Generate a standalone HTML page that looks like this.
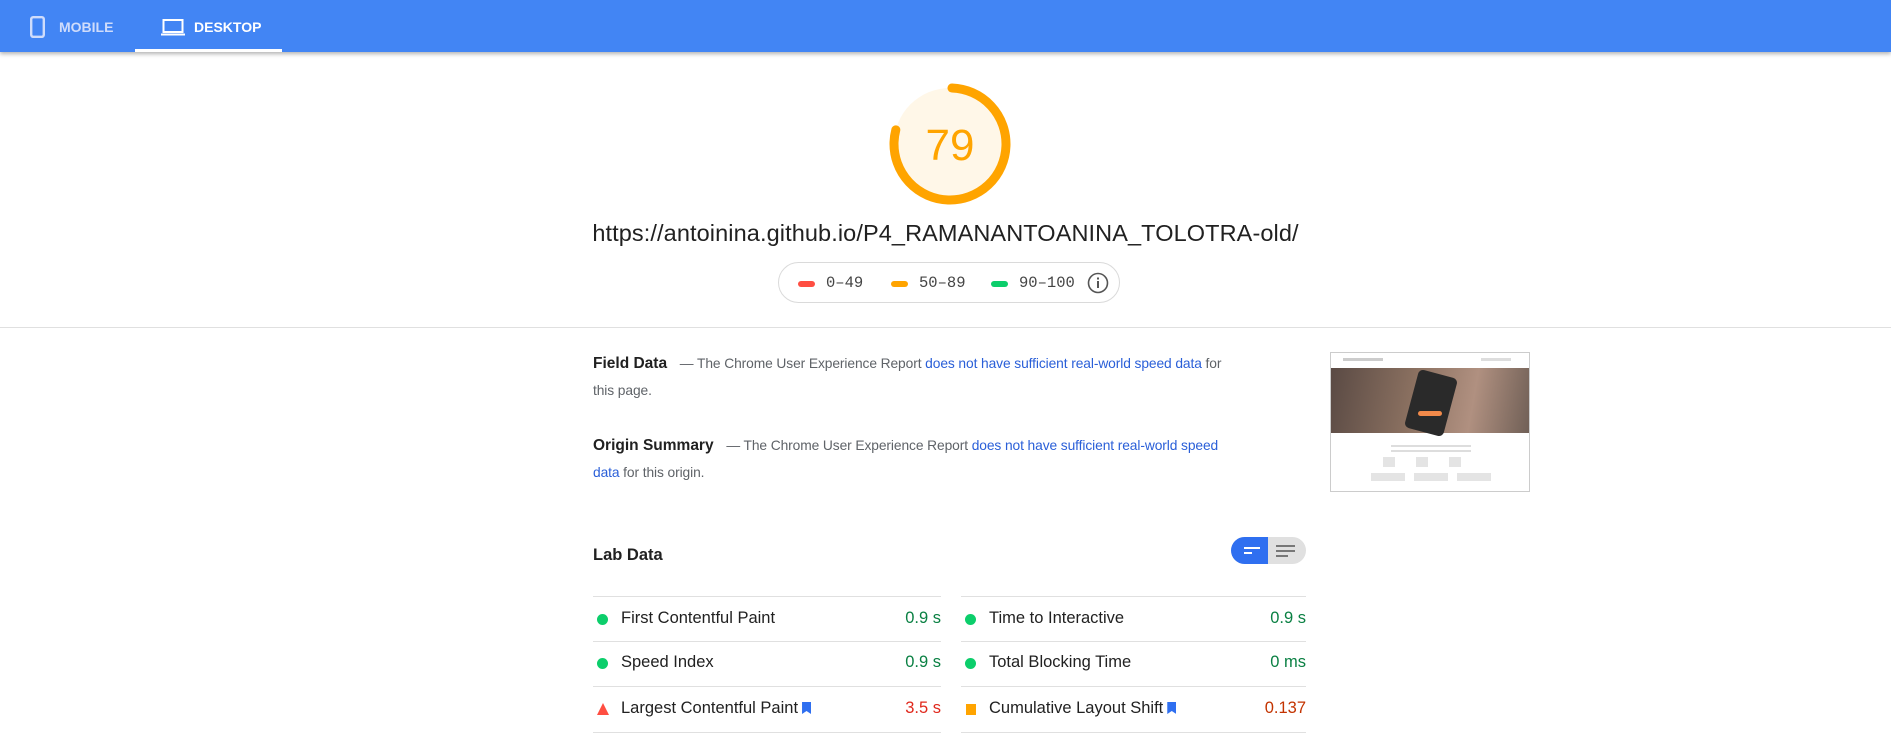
<!DOCTYPE html>
<html><head><meta charset="utf-8"><style>
*{margin:0;padding:0;box-sizing:border-box}
body{width:1891px;height:740px;overflow:hidden;background:#fff;font-family:"Liberation Sans",Arial,sans-serif;color:#212121;position:relative}
.hdr{position:absolute;left:0;top:0;width:1891px;height:52px;background:#4285f4;box-shadow:0 2px 4px rgba(0,0,0,.3)}
.tab{position:absolute;top:0;height:52px;color:#fff;font-weight:bold;font-size:14px;line-height:54px}
.ul{position:absolute;left:135px;top:49px;width:147px;height:3px;background:#fff}
.abs{position:absolute}
.url{position:absolute;left:0;width:1891px;top:220px;text-align:center;font-size:23.5px;color:#212121;letter-spacing:.1px}
.legend{position:absolute;left:778px;top:262px;width:342px;height:41px;border:1px solid #dadada;border-radius:21px;font-family:"Liberation Mono",monospace;font-size:15.5px;color:#444}
.legend span{position:absolute;top:11px}
.bar{position:absolute;top:18px;width:17px;height:6px;border-radius:3px}
.div{position:absolute;left:0;top:327px;width:1891px;height:1px;background:#e0e0e0}
.p{position:absolute;left:593px;width:640px;font-size:13.8px;line-height:27px;color:#5f6368;letter-spacing:-.1px}
.p b{color:#212121;font-size:15.5px;margin-right:9px;letter-spacing:0}
.p a{color:#2a5fd8;text-decoration:none}
.row{position:absolute;height:1px;background:#e0e0e0}
.m{position:absolute;font-size:16.5px;color:#212121}
.v{position:absolute;font-size:16.5px;text-align:right}
.dot{position:absolute;width:11px;height:11px;border-radius:50%;background:#0cce6b}
.bm{display:inline-block;width:9px;height:12px;background:#2f6ff0;margin-left:4px;vertical-align:-1px;clip-path:polygon(0 0,100% 0,100% 100%,50% 75%,0 100%)}
</style></head><body>
<div class="hdr">
 <svg class="abs" style="left:30px;top:16px" width="15" height="22" viewBox="0 0 15 22"><rect x="1.2" y="1.2" width="12.6" height="19.6" rx="2" fill="none" stroke="#cfdcfb" stroke-width="2.4"/></svg>
 <div class="tab" style="left:59px;color:#cfdcfb">MOBILE</div>
 <svg class="abs" style="left:161px;top:19px" width="25" height="17" viewBox="0 0 25 17"><rect x="2.5" y="1" width="19" height="12" fill="none" stroke="#fff" stroke-width="2"/><rect x="0" y="14.5" width="24" height="2" fill="#fff"/></svg>
 <div class="tab" style="left:194px">DESKTOP</div>
 <div class="ul"></div>
</div>
<svg class="abs" style="left:884px;top:78px" width="132" height="132" viewBox="0 0 132 132">
 <circle cx="66" cy="66" r="56" fill="#fff7e8"/>
 <circle cx="66" cy="66" r="56" fill="none" stroke="#ffa400" stroke-width="9" stroke-linecap="round" stroke-dasharray="276 400" transform="rotate(-88 66 66)"/>
 <text x="66" y="82" text-anchor="middle" font-family="Liberation Sans" font-size="44" fill="#ffa400">79</text>
</svg>
<div class="url">https://antoinina.github.io/P4_RAMANANTOANINA_TOLOTRA-old/</div>
<div class="legend">
 <div class="bar" style="left:19px;background:#ff4e42"></div><span style="left:47px">0–49</span>
 <div class="bar" style="left:112px;background:#ffa400"></div><span style="left:140px">50–89</span>
 <div class="bar" style="left:212px;background:#0cce6b"></div><span style="left:240px">90–100</span>
 <svg class="abs" style="left:308px;top:9px" width="22" height="22" viewBox="0 0 22 22"><circle cx="11" cy="11" r="9.5" fill="none" stroke="#555" stroke-width="1.6"/><rect x="10" y="9" width="2" height="7" fill="#555"/><rect x="10" y="5.5" width="2" height="2" fill="#555"/></svg>
</div>
<div class="div"></div>
<div class="p" style="top:350px"><b>Field Data</b> — The Chrome User Experience Report <a>does not have sufficient real-world speed data</a> for this page.</div>
<div class="p" style="top:432px"><b>Origin Summary</b> — The Chrome User Experience Report <a>does not have sufficient real-world speed data</a> for this origin.</div>
<div class="abs" style="left:1330px;top:352px;width:200px;height:140px;border:1px solid #ccc;background:#fff;overflow:hidden">
 <div class="abs" style="left:12px;top:5px;width:40px;height:3px;background:#ccc"></div>
 <div class="abs" style="left:150px;top:5px;width:30px;height:3px;background:#ddd"></div>
 <div class="abs" style="left:0;top:15px;width:200px;height:65px;background:linear-gradient(100deg,#5a4a44,#8a7060 40%,#b09080 70%,#6e5e55)"></div>
 <div class="abs" style="left:80px;top:20px;width:40px;height:60px;background:#2a2a2a;border-radius:5px;transform:rotate(15deg)"></div>
 <div class="abs" style="left:87px;top:58px;width:24px;height:5px;background:#f28a4a;border-radius:3px"></div>
 <div class="abs" style="left:60px;top:92px;width:80px;height:2px;background:#ddd"></div>
 <div class="abs" style="left:60px;top:97px;width:80px;height:2px;background:#ddd"></div>
 <div class="abs" style="left:52px;top:104px;width:96px;height:10px;background:repeating-linear-gradient(90deg,#e4e4e4 0 12px,#fff 12px 33px)"></div>
 <div class="abs" style="left:40px;top:120px;width:120px;height:8px;background:repeating-linear-gradient(90deg,#e4e4e4 0 34px,#fff 34px 43px)"></div>
</div>
<div class="abs" style="left:593px;top:546px;font-size:16.5px;font-weight:bold;color:#212121">Lab Data</div>
<div class="abs" style="left:1231px;top:537px;width:75px;height:27px;border-radius:14px;background:#e0e0e0;overflow:hidden">
 <div class="abs" style="left:0;top:0;width:37px;height:27px;background:#2f6ff0"></div>
 <div class="abs" style="left:13px;top:10px;width:16px;height:2px;background:#fff"></div>
 <div class="abs" style="left:13px;top:15px;width:8px;height:2px;background:#fff"></div>
 <div class="abs" style="left:45px;top:8px;width:19px;height:2px;background:#777"></div>
 <div class="abs" style="left:45px;top:13px;width:19px;height:2px;background:#777"></div>
 <div class="abs" style="left:45px;top:18px;width:12px;height:2px;background:#777"></div>
</div>
<div class="row" style="left:593px;top:596px;width:348px"></div><div class="row" style="left:961px;top:596px;width:345px"></div>
<div class="row" style="left:593px;top:641px;width:348px"></div><div class="row" style="left:961px;top:641px;width:345px"></div>
<div class="row" style="left:593px;top:686px;width:348px"></div><div class="row" style="left:961px;top:686px;width:345px"></div>
<div class="row" style="left:593px;top:732px;width:348px"></div><div class="row" style="left:961px;top:732px;width:345px"></div>

<div class="dot" style="left:597px;top:614px"></div><div class="m" style="left:621px;top:609px">First Contentful Paint</div><div class="v" style="left:841px;width:100px;top:609px;color:#0a8043">0.9 s</div>
<div class="dot" style="left:965px;top:614px"></div><div class="m" style="left:989px;top:609px">Time to Interactive</div><div class="v" style="left:1206px;width:100px;top:609px;color:#0a8043">0.9 s</div>
<div class="dot" style="left:597px;top:658px"></div><div class="m" style="left:621px;top:653px">Speed Index</div><div class="v" style="left:841px;width:100px;top:653px;color:#0a8043">0.9 s</div>
<div class="dot" style="left:965px;top:658px"></div><div class="m" style="left:989px;top:653px">Total Blocking Time</div><div class="v" style="left:1206px;width:100px;top:653px;color:#0a8043">0 ms</div>
<svg class="abs" style="left:597px;top:703px" width="12" height="12" viewBox="0 0 12 12"><polygon points="6,0 12,12 0,12" fill="#ff4e42"/></svg>
<div class="m" style="left:621px;top:699px">Largest Contentful Paint<span class="bm"></span></div><div class="v" style="left:841px;width:100px;top:699px;color:#e0281c">3.5 s</div>
<div class="abs" style="left:966px;top:704px;width:10px;height:11px;background:#ffa400"></div>
<div class="m" style="left:989px;top:699px">Cumulative Layout Shift<span class="bm"></span></div><div class="v" style="left:1206px;width:100px;top:699px;color:#c33300">0.137</div>
</body></html>
